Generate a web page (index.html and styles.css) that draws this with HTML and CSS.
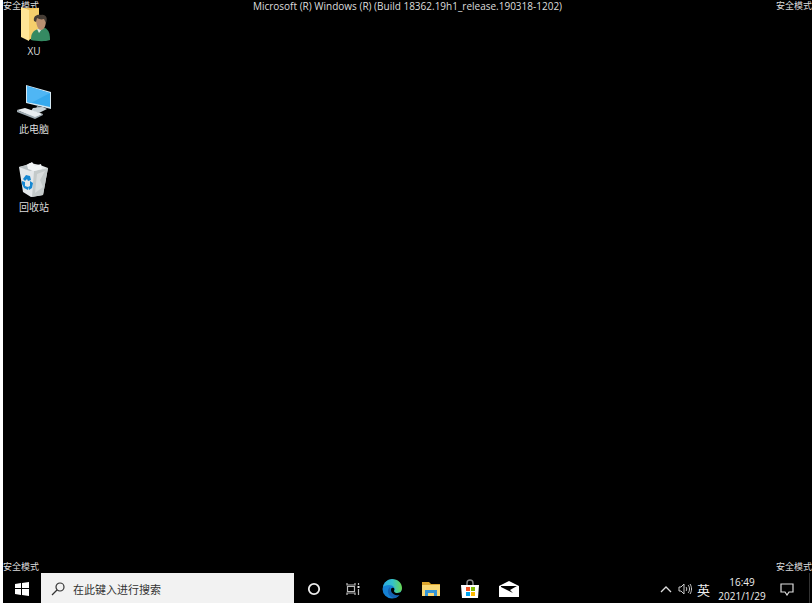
FILE: index.html
```html
<!DOCTYPE html>
<html lang="zh-CN">
<head>
    <meta charset="UTF-8">
    <meta name="viewport" content="width=device-width, initial-scale=1.0">
    <title>安全模式</title>
    <link rel="stylesheet" href="styles.css">
</head>
<body>
    <div class="desktop">
        <!-- Safe mode text along the top edge -->
        <header class="safe-bar safe-bar-top">
            <span>安全模式</span>
            <span class="build">Microsoft (R) Windows (R) (Build 18362.19h1_release.190318-1202)</span>
            <span>安全模式</span>
        </header>

        <!-- Desktop shortcuts -->
        <main class="shortcuts">
            <a class="shortcut" href="#user">
                <svg width="36" height="36" viewBox="0 0 36 36" aria-hidden="true">
                    <path d="M5 2h18v27H9z" fill="#eebf55"/>
                    <path d="M5 1l8 3v31l-8-4z" fill="#ffe596"/>
                    <path d="M13 4l10-2v26l-10 6z" fill="#f5cf6c"/>
                    <path d="M15 34c0-7 2-9 7-11l7-1c4 2 5 6 5 12-6 2-14 1-19 0z" fill="#358a62"/>
                    <path d="M21 23l2 4 3-4z" fill="#dce8df"/>
                    <path d="M20 13c0-4 10-4 10 1 0 6-2 10-5 10s-5-5-5-11z" fill="#b98f70"/>
                    <path d="M18 15c-1-5 3-7 7-6 5-1 7 3 5 8l-2-4c-3 1-5 0-7-1l-1 4z" fill="#463d35"/>
                </svg>
                <span>XU</span>
            </a>
            <a class="shortcut" href="#computer">
                <svg width="36" height="36" viewBox="0 0 36 36" aria-hidden="true">
                    <path d="M10 1l25 7v17l-25-6z" fill="#d5e8f2"/>
                    <path d="M11 2l23 7v14l-23-5z" fill="#36a9ed"/>
                    <path d="M11 2l23 7-19 10-4-1z" fill="#4fb6f4"/>
                    <path d="M21 22l5 1v3l-6-1z" fill="#889ba5"/>
                    <path d="M17 24l10-1 4 2-8 4-8-2z" fill="#c7d2d7"/>
                    <path d="M1 26l8-2 18 6-8 4z" fill="#e8edf0"/>
                    <path d="M1 26l18 7 8-3v1l-8 4-18-7z" fill="#9eabb2"/>
                </svg>
                <span>此电脑</span>
            </a>
            <a class="shortcut" href="#recycle">
                <svg width="36" height="36" viewBox="0 0 36 36" aria-hidden="true">
                    <path d="M3 5l7-2 4-2 5 1 5 1 8 3-5 27-12 2-8-5z" fill="#e4e8ea"/>
                    <path d="M18 9l14-3-5 27-11 2z" fill="#c4caca"/>
                    <path d="M3 5l9-2 7 4-5 2z" fill="#b9c1c4"/>
                    <path d="M11 3l5-3 3 4 6-2 1 5-8 2-6-2z" fill="#f3f6f7"/>
                    <path d="M21 12l8-3-5 9 3 7-8 6" fill="#d9dddd"/>
                    <path d="M7 17l3-4 4 1 1 4-3 1-1-2-2 2zM6 19l3 1v4l3 1v3l-4-2-2-4zM14 19l3 2-1 5-3 2-1-3 2-1z" fill="#1688d2"/>
                </svg>
                <span>回收站</span>
            </a>
        </main>

        <!-- Safe mode text above the taskbar -->
        <div class="safe-bar">
            <span>安全模式</span>
            <span>安全模式</span>
        </div>

        <footer class="taskbar">
            <button class="task-button start" aria-label="开始">
                <svg width="14" height="14" viewBox="0 0 14 14" fill="#fff" aria-hidden="true">
                    <path d="M0 2l6-1v5H0zM7 1l7-1v6H7zM0 7h6v6l-6-1zM7 7h7v7l-7-1z"/>
                </svg>
            </button>
            <label class="search">
                <svg width="14" height="14" viewBox="0 0 14 14" fill="none" stroke="#333" stroke-width="1.2" aria-hidden="true">
                    <circle cx="9" cy="5" r="4"/>
                    <path d="M6 8l-5 5"/>
                </svg>
                <input type="text" placeholder="在此键入进行搜索" aria-label="搜索">
            </label>

            <button class="task-button" aria-label="Cortana">
                <svg width="14" height="14" viewBox="0 0 14 14" fill="none" stroke="#eee" stroke-width="1.8" aria-hidden="true">
                    <circle cx="7" cy="7" r="5.2"/>
                </svg>
            </button>
            <button class="task-button" aria-label="任务视图">
                <svg width="14" height="14" viewBox="0 0 14 14" fill="none" stroke="#bbb" stroke-width="1.2" aria-hidden="true">
                    <path d="M1 1v2h8V1M1 13v-2h8v2M1.5 4.5h7v5h-7zM12.5 1v2M12.5 7v6"/>
                    <path d="M11.5 4h2v2h-2z" fill="#eee" stroke="none"/>
                </svg>
            </button>
            <button class="task-button" aria-label="Edge">
                <svg width="20" height="20" viewBox="0 0 20 20" aria-hidden="true">
                    <defs>
                        <linearGradient id="wave" x1="0" y1="0" x2="1" y2="0">
                            <stop offset="0" stop-color="#2babe2"/>
                            <stop offset="0.5" stop-color="#35c1cb"/>
                            <stop offset="1" stop-color="#68d852"/>
                        </linearGradient>
                    </defs>
                    <circle cx="10" cy="10" r="9.5" fill="#1581d4"/>
                    <path d="M1 8C2 3 6 0 10 0c6 0 10 4 10 9 0 4-3 5-6 5-2 0-3-1-2-2 2-3-1-6-5-6-3 0-5 1-6 2z" fill="url(#wave)"/>
                    <path d="M8 8c-4 3-2 10 4 11 3 0 5-2 6-4-4 2-9 1-10-7z" fill="#1561b0"/>
                    <path d="M10 9c2-1 3 1 2 3 0 2 4 3 7 1l1 2-2 1c-4 1-9-1-9-5 0-1 0-2 1-2z" fill="#000"/>
                </svg>
            </button>
            <button class="task-button" aria-label="文件资源管理器">
                <svg width="18" height="16" viewBox="0 0 18 16" aria-hidden="true">
                    <path d="M0 1h7l2 2h9v4H0z" fill="#dda52d"/>
                    <path d="M0 4h18v11H0z" fill="#f8d775"/>
                    <path d="M3 9h12v6h-3v-3H6v3H3z" fill="#3595d5"/>
                </svg>
            </button>
            <button class="task-button" aria-label="Microsoft Store">
                <svg width="18" height="20" viewBox="0 0 18 20" aria-hidden="true">
                    <path d="M6 6V4c0-4 6-4 6 0v2" fill="none" stroke="#888" stroke-width="1.4"/>
                    <path d="M0 6h18l-1 13H1z" fill="#fff"/>
                    <path d="M5 8h4v4H5z" fill="#f25022"/>
                    <path d="M10 8h4v4h-4z" fill="#7fba00"/>
                    <path d="M5 13h4v4H5z" fill="#00a4ef"/>
                    <path d="M10 13h4v4h-4z" fill="#ffb900"/>
                </svg>
            </button>
            <button class="task-button" aria-label="邮件">
                <svg width="20" height="16" viewBox="0 0 20 16" aria-hidden="true">
                    <path d="M0 5l10-5 10 5v11H0z" fill="#fff"/>
                    <path d="M2 5h16l-7 4 3 3L2 6z" fill="#000"/>
                </svg>
            </button>

            <!-- Notification area -->
            <div class="tray">
                <button class="tray-button" aria-label="显示隐藏的图标">
                    <svg width="12" height="8" viewBox="0 0 12 8" fill="none" stroke="#ddd" stroke-width="1.3" aria-hidden="true">
                        <path d="M1 7l5-5 5 5"/>
                    </svg>
                </button>
                <button class="tray-button" aria-label="音量">
                    <svg width="14" height="12" viewBox="0 0 14 12" fill="none" stroke="#ccc" aria-hidden="true">
                        <path d="M1 4h2l3-3v10L3 8H1zM8 4c1 1 1 3 0 4M10 2c2 2 2 6 0 8M12 1c2 3 2 7 0 10"/>
                    </svg>
                </button>
                <button class="tray-button language">英</button>
                <button class="clock"><span>16:49</span><span>2021/1/29</span></button>
                <button class="notice" aria-label="通知">
                    <svg width="14" height="14" viewBox="0 0 14 14" fill="none" stroke="#ddd" stroke-width="1.2" aria-hidden="true">
                        <path d="M1 2h12v8H9l-2 3-2-3H1z"/>
                    </svg>
                </button>
                <button class="show-desktop" aria-label="显示桌面"></button>
            </div>
        </footer>
    </div>
</body>
</html>
```
FILE: styles.css
```css
* {
    box-sizing: border-box;
}

body {
    margin: 0;
    padding-left: 3px;
    background-color: #fff;
    font-family: "Open Sans", "Noto Sans CJK SC", sans-serif;
    font-size: 10px;
    color: #ddd;
}

.desktop {
    display: flex;
    flex-direction: column;
    min-height: 100vh;
    position: relative;
    background-color: #000;
}

/* Safe mode captions */
.safe-bar {
    display: flex;
    align-items: center;
    justify-content: space-between;
    font-size: 9px;
    line-height: 12px;
    white-space: nowrap;
}

.safe-bar-top {
    position: absolute;
    top: 0;
    left: 0;
    right: 0;
}

.build {
    font-size: 10px;
}

/* Shortcuts */
.shortcuts {
    display: flex;
    flex: 1;
    flex-direction: column;
    align-items: flex-start;
    gap: 24px;
    padding-top: 6px;
    z-index: 1;
}

.shortcut {
    display: flex;
    flex-direction: column;
    align-items: center;
    width: 62px;
    line-height: 18px;
    color: #ddd;
    text-decoration: none;
}

.shortcut svg {
    display: block;
}

/* Taskbar */
.taskbar {
    display: flex;
    height: 30px;
}

button {
    display: flex;
    align-items: center;
    justify-content: center;
    margin: 0;
    padding: 2px 0 0;
    border: 0;
    background: none;
    color: #eee;
    font: inherit;
}

button:hover {
    background-color: #222;
}

.task-button {
    width: 39px;
}

.start {
    width: 38px;
}

.search {
    display: flex;
    align-items: center;
    flex: 0 1 253px;
    gap: 8px;
    padding: 2px 10px 0;
    background-color: #f2f2f2;
}

.search input {
    flex: 1;
    min-width: 0;
    padding: 0;
    border: 0;
    outline: 0;
    background: none;
    font: inherit;
    font-size: 11px;
    color: #222;
}

.search input::placeholder {
    color: #333;
    opacity: 1;
}

/* Notification area */
.tray {
    display: flex;
    margin-left: auto;
}

.tray-button {
    width: 19px;
}

.language {
    font-size: 13px;
}

.clock {
    flex-direction: column;
    width: 58px;
    line-height: 14px;
}

.notice {
    width: 32px;
    margin-right: 6px;
}

.show-desktop {
    width: 3px;
    border-left: 1px solid #333;
}
```
